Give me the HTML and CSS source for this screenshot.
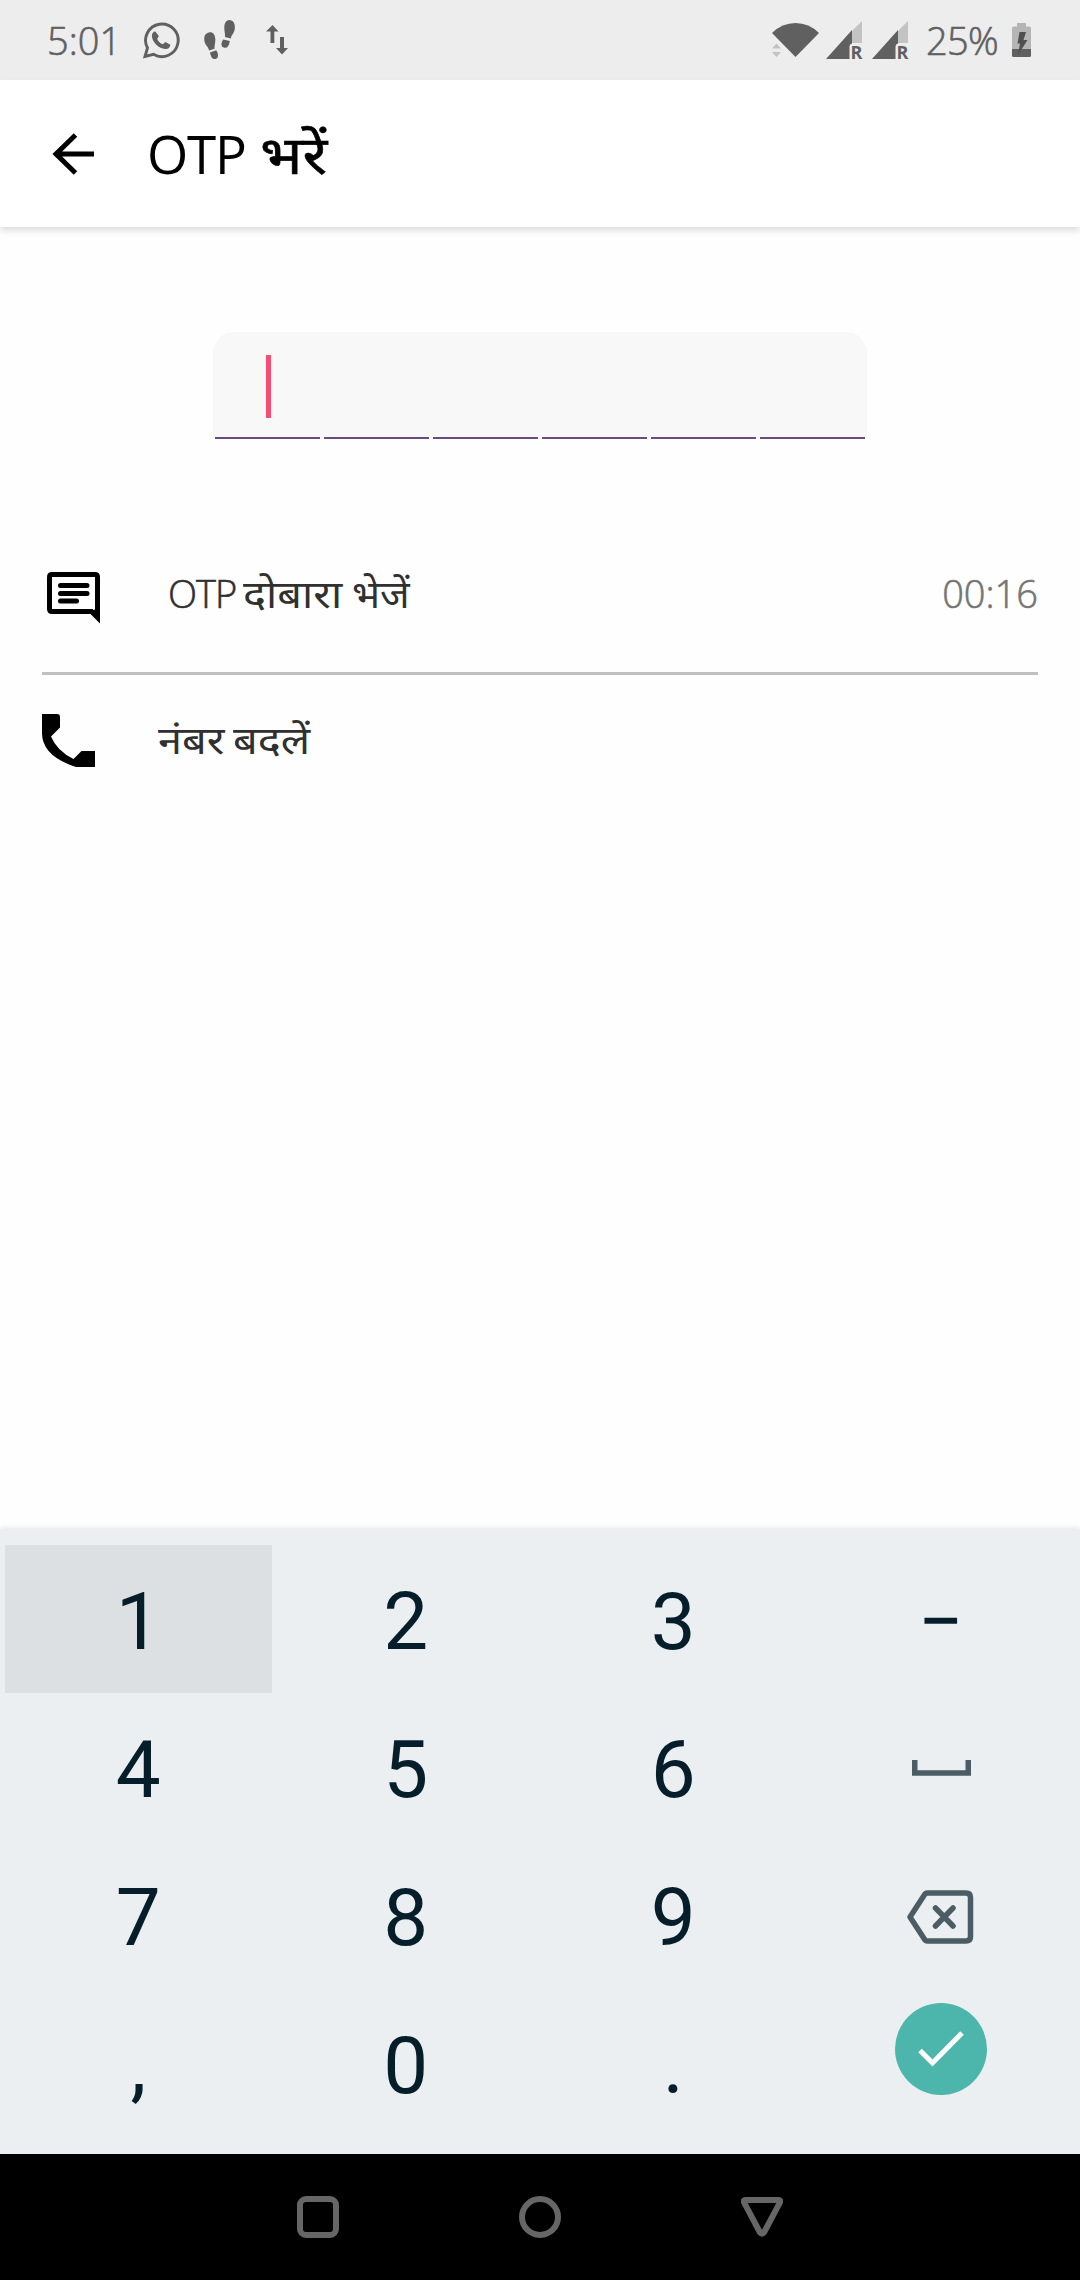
FILE: index.html
```html
<!DOCTYPE html>
<html lang="hi">
<head>
<meta charset="utf-8">
<title>OTP भरें</title>
<link rel="stylesheet" href="styles.css">
</head>
<body>
<div class="screen">
  <div class="status">
    <span class="clock">5:01</span>
    <svg class="whatsapp" width="37" height="37" viewBox="0 0 37 37"><path d="M2 34.500 4.500 26A16.300 16.300 0 1 1 10.500 32.300Z" fill="none" stroke="currentColor" stroke-width="2.900"/><path d="M12.300 9.500c-1.200-.4-3.600 1.400-3.400 4.600.4 6.400 7 12.600 13.300 12.900 2.600.1 5.100-1.600 5.100-4.300l-4.900-2.700-2.600 2.300c-2.400-.8-4.700-3.100-5.600-5.400l1.600-2.800Z" fill="currentColor"/></svg>
    <svg class="steps" width="32" height="40" viewBox="0 0 32 40" fill="currentColor"><path d="M5 12.500c3.500-.8 6 1.700 6.300 6.500.2 4-.9 6-.8 9.800l-5.400 1.800C4.600 26.500.5 25 .3 20 .1 15.500 1.500 13.300 5 12.500ZM6 32.500l6.300-2.200c1.200 2 2.500 4.800 1.400 7-1 2.200-4.200 2.200-5.600.6C7 36.500 6.300 34.300 6 32.500Z"/><path d="M26.500.2c-3.600-.6-6.100 2.200-6.200 7-.1 3.700.9 6 .7 9.700l5.800 1.600c.5-3.500 3.600-5 4-9.900C31.200 4.300 29.900.9 26.500.2ZM19.300 19.500l6.500 1.500c-.3 2-.6 3.600-1.800 5.200-1.300 1.800-3.700 2-5.300.8-2.300-1.800-1-5.500.6-7.500Z"/></svg>
    <svg class="updown" width="22" height="30" viewBox="0 0 22 30" fill="currentColor"><path d="M6.500 0 12.500 6.500H8.300V18H4.500V6.500H0ZM14 12h4V23h4l-6 6.500L10 23h4Z"/></svg>
    <div class="status-right">
      <svg class="wifi" width="47" height="36" viewBox="0 0 47 36"><path d="M0 11Q10 1 23.500 1T47 11L23.500 35Z" fill="currentColor"/><path d="M4.500 21.500 9 26.500H0ZM4.500 35 9 30H0Z" fill="#c3c3c3"/></svg>
      <svg class="signal" width="42" height="46" viewBox="0 0 42 46"><path d="M25 11 36 0V22H25Z" fill="#c3c3c3"/><path d="M0 38 26 9V22.500Q23.500 23 23.500 25.500V38Z" fill="currentColor"/><text x="24.500" y="37.500" class="roam">R</text></svg>
      <svg class="signal" width="42" height="46" viewBox="0 0 42 46"><path d="M25 11 36 0V22H25Z" fill="#c3c3c3"/><path d="M0 38 26 9V22.500Q23.500 23 23.500 25.500V38Z" fill="currentColor"/><text x="24.500" y="37.500" class="roam">R</text></svg>
      <span class="percent">25%</span>
      <svg class="battery" width="19" height="34" viewBox="0 0 19 34"><path d="M5 0H14V3.500H17.500Q19 3.500 19 5V26H0V5Q0 3.500 1.500 3.500H5Z" fill="#b5b5b5"/><path d="M0 26H19V32.500Q19 34 17.500 34H1.500Q0 34 0 32.500Z" fill="currentColor"/><path d="M7.500 9H14L11.500 17H15.500L6 32 8 20.500H5.500Z" fill="#505050"/></svg>
    </div>
  </div>

  <header class="appbar">
    <svg width="43" height="42" viewBox="0 0 43 42" fill="none" stroke="#000" stroke-width="5"><path d="M42 21H3.500M23.500 2 4 21 23.500 40"/></svg>
    <h1 class="title"><span class="title-latin">OTP</span><span class="hindi">भरें</span></h1>
  </header>

  <main class="content">
    <div class="otp">
      <span class="cell"><i class="caret"></i></span><span class="cell"></span><span class="cell"></span><span class="cell"></span><span class="cell"></span><span class="cell"></span>
    </div>

    <div class="row resend">
      <svg width="54" height="52" viewBox="0 0 54 52"><path d="M5 2.500H48Q50.500 2.500 50.500 5V45.500L44.500 39.500H5Q2.500 39.500 2.500 37V5Q2.500 2.500 5 2.500Z" fill="none" stroke="#000" stroke-width="5"/><path d="M43 39 53 50V36Z"/><path d="M13.500 13.500H40M13.500 21.500H40M13.500 29H29.500" stroke="#000" stroke-width="5" stroke-linecap="round"/></svg>
      <span class="label"><span class="latin">OTP</span><span class="hindi w-again">दोबारा</span><span class="hindi w-send">भेजें</span></span>
      <span class="timer">00:16</span>
    </div>

    <div class="row change">
      <svg width="53" height="53" viewBox="0 0 53 53"><path d="M0 0H15Q18 0 18 3V13.500L9 22.500Q15 37 31.500 45L39.500 37H53V53H34Q0 42 0 19Z"/></svg>
      <span class="label"><span class="hindi w-number">नंबर</span><span class="hindi">बदलें</span></span>
    </div>
  </main>

  <div class="keyboard">
    <span class="key pressed">1</span><span class="key">2</span><span class="key">3</span><span class="key">−</span>
    <span class="key">4</span><span class="key">5</span><span class="key">6</span>
    <span class="key space"><svg width="59" height="16" viewBox="0 0 59 16" fill="none" stroke="#4b5c64" stroke-width="5.500"><path d="M2.750 0V13H56.250V0"/></svg></span>
    <span class="key">7</span><span class="key">8</span><span class="key">9</span>
    <span class="key backspace"><svg width="67" height="54" viewBox="0 0 67 54" fill="none" stroke="#4b5c64" stroke-width="5.500" stroke-linejoin="round"><path d="M20.500 3H59Q63.500 3 63.500 7.500V46.500Q63.500 51 59 51H20.500Q18.500 51 17.500 49.300L3 27 17.500 4.700Q18.500 3 20.500 3Z"/><path d="M28.500 18 46 36M46 18 28.500 36" stroke-linecap="round"/></svg></span>
    <span class="key">,</span><span class="key">0</span><span class="key">.</span>
    <span class="key done"><span class="fab"><svg width="46" height="36" viewBox="0 0 46 36" fill="none" stroke="#fff" stroke-width="5"><path d="M2 19.500 14.500 32 44 2"/></svg></span></span>
  </div>

  <nav class="navbar">
    <svg width="42" height="42" viewBox="0 0 42 42"><rect x="3" y="3" width="36" height="36" rx="6"/></svg>
    <svg width="42" height="42" viewBox="0 0 42 42"><circle cx="21" cy="21" r="18"/></svg>
    <svg width="42" height="42" viewBox="0 0 42 42"><path d="M4.500 4H37.500Q40 4 39 6.300L23 36.500Q21 39 19 36.500L3 6.300Q2 4 4.500 4Z"/></svg>
  </nav>
</div>
</body>
</html>
```

FILE: styles.css
```css
* { box-sizing: border-box; }
body { margin: 0; background: #fff; font-family: "Noto Sans", "Noto Sans Devanagari", sans-serif; }
svg { display: block; flex: none; }

.screen { width: 1080px; height: 2280px; display: flex; flex-direction: column; background: #fefefe; }

.status { height: 80px; background: #ededed; color: #606060; display: flex; align-items: flex-start; padding-left: 47px; flex: none; }
.clock, .percent, .timer { font-family: "Open Sans", sans-serif; font-weight: 350; font-size: 38px; white-space: nowrap; -webkit-text-stroke: .6px currentColor; }
.clock, .percent { line-height: 80px; }
.clock { width: 96px; }
.whatsapp { margin-top: 22px; }
.steps { margin: 20px 0 0 24px; }
.updown { margin: 25px 0 0 30px; }
.status-right { margin-left: auto; display: flex; padding-right: 49px; }
.wifi { margin: 22px 7px 0 0; }
.signal { margin: 21px 4px 0 0; }
.percent { width: 84px; padding-left: 8px; letter-spacing: -.7px; }
.battery { margin-top: 23px; margin-left: 10px; }
.roam { font: 700 18px "Open Sans", sans-serif; fill: #606060; }

.appbar { height: 147px; background: #fff; box-shadow: 0 4px 6px rgba(0, 0, 0, .12); display: flex; align-items: center; padding-left: 52px; flex: none; }
.title { margin: 0 0 0 52px; font-size: 53px; font-weight: 400; line-height: 145px; color: #000; display: flex; }
.title-latin { font-family: "Open Sans", sans-serif; letter-spacing: -1.2px; width: 113px; }
.hindi { transform: scaleX(1.14); transform-origin: left; }
.title .hindi { -webkit-text-stroke: .6px currentColor; }

.content { flex: 1; display: flex; flex-direction: column; padding: 105px 42px 0; }
.otp { align-self: center; width: 654px; height: 107px; background: #f8f8f8; border-radius: 21px 21px 0 0; display: grid; grid-template-columns: repeat(6, 1fr); gap: 4px; padding: 0 2px; }
.cell { border-bottom: 2px solid #6a4b82; display: flex; justify-content: center; padding-top: 23px; }
.caret { width: 5px; height: 63px; margin-left: 1px; background: #f54d73; }

.row { display: flex; align-items: center; color: #303030; font-size: 38px; }
.label { display: flex; white-space: nowrap; padding-bottom: 8px; }
.resend { height: 153px; margin-top: 83px; border-bottom: 3px solid #c0c0c0; padding-left: 5px; }
.resend svg { margin-top: 2px; }
.resend .label { margin-left: 67px; }
.latin { font-family: "Open Sans", sans-serif; font-weight: 350; letter-spacing: -1px; width: 75px; -webkit-text-stroke: .6px currentColor; }
.w-again { width: 109px; }
.w-send { transform: scaleX(1.05); }
.timer { margin-left: auto; color: #757575; padding-bottom: 8px; }
.change { height: 131px; }
.change .label { margin-left: 63px; padding-bottom: 4px; }
.w-number { width: 75px; }

.keyboard { height: 625px; background: #ebeff2; padding: 16px 5px 17px; display: grid; grid-template-columns: repeat(4, 266.500px); column-gap: 1px; grid-template-rows: repeat(4, 148px); box-shadow: 0 -1px 5px rgba(0, 0, 0, .1); flex: none; }
.key { display: flex; align-items: center; justify-content: center; padding-top: 5px; font: 400 80px Roboto, sans-serif; color: #061e29; }
.space { padding: 2px 0 0 1px; }
.backspace { padding: 4px 1px 0 0; }
.pressed { background: #dce0e3; }
.done { align-items: flex-start; padding-top: 14px; }
.fab { width: 92px; height: 92px; border-radius: 50%; background: #4db6ac; display: flex; align-items: center; justify-content: center; }

.navbar { height: 126px; background: #000; display: flex; justify-content: center; align-items: center; gap: 180px; flex: none; }
.navbar svg { fill: none; stroke: #666; stroke-width: 6; }
```
